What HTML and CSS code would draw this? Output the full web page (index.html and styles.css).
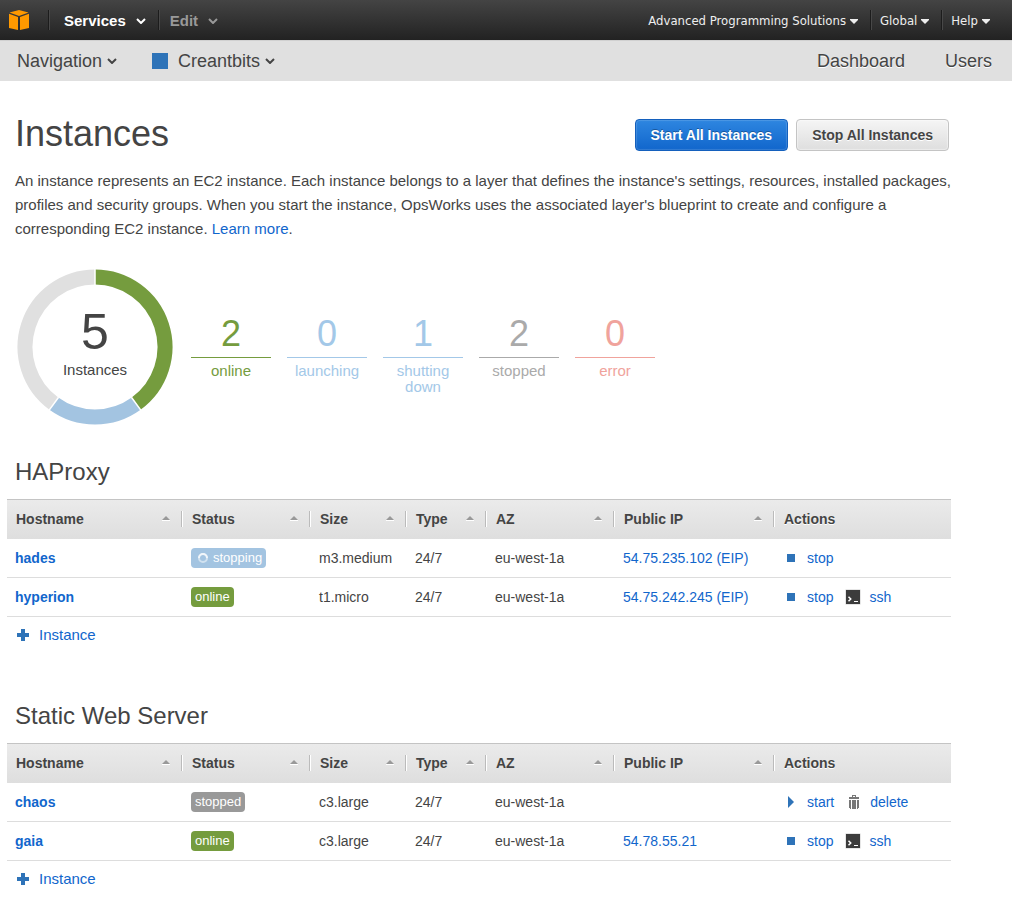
FILE: index.html
```html
<!DOCTYPE html>
<html lang="en">
<head>
<meta charset="utf-8">
<title>Instances</title>
<link rel="stylesheet" href="styles.css">
</head>
<body>
<svg class="symbols" aria-hidden="true">
  <symbol id="i-chevron" viewBox="0 0 10 6"><path d="M1 1l4 4 4-4" fill="none" stroke="currentColor" stroke-width="2"/></symbol>
  <symbol id="i-caret" viewBox="0 0 8 5"><path d="M0 0h8v1L4 5 0 1z" fill="currentColor"/></symbol>
  <symbol id="i-sort" viewBox="0 0 8 5"><path d="M0 4h8v1H0z" fill="#fff"/><path d="M4 0l4 4H0z" fill="#999"/></symbol>
  <symbol id="i-stop" viewBox="0 0 16 16"><path d="M4 4h8v8H4z" fill="#2e73b8"/></symbol>
  <symbol id="i-start" viewBox="0 0 16 16"><path d="M5 2l6 6-6 6z" fill="#2e73b8"/></symbol>
  <symbol id="i-ssh" viewBox="0 0 16 16"><path d="M.5 .5h15v15H.5z" fill="#ccc"/><path d="M1 1h14v14H1z" fill="#3c3c3c"/><path d="M3.500 7.750l2.250 2.250-2.250 2.250" fill="none" stroke="#fff" stroke-width="1.500"/><path d="M9 12h4v1H9z" fill="#fff"/></symbol>
  <symbol id="i-trash" viewBox="0 0 16 16"><path d="M6 1h4v2h3v2H3V3h3zM7 2v1h2V2z" fill="#777" fill-rule="evenodd"/><path d="M3 6h2v9H4v-1H3zM6 6h4v9H6zM11 6h2v8h-1v1h-1z" fill="#777"/></symbol>
  <symbol id="i-plus" viewBox="0 0 12 12"><path d="M4 0h4v4h4v4H8v4H4V8H0V4h4z" fill="#2e73b8"/></symbol>
</svg>

<header class="topbar">
  <a class="logo" href="#" aria-label="Home">
    <svg width="20" height="20" viewBox="0 0 20 20"><path d="M10 0l9.500 2.500L10 6 .5 2.500z M0 3.800l9 3.200V20l-9-2z M20 3.800L11 7v13l9-2z" fill="#f90"/></svg>
  </a>
  <nav class="topnav">
    <button class="topitem" type="button">Services<svg class="chevron"><use href="#i-chevron"/></svg></button>
    <button class="topitem dim" type="button">Edit<svg class="chevron"><use href="#i-chevron"/></svg></button>
  </nav>
  <nav class="account">
    <button class="acctitem" type="button">Advanced Programming Solutions<svg class="caret"><use href="#i-caret"/></svg></button>
    <button class="acctitem" type="button">Global<svg class="caret"><use href="#i-caret"/></svg></button>
    <button class="acctitem" type="button">Help<svg class="caret"><use href="#i-caret"/></svg></button>
  </nav>
</header>

<nav class="subbar">
  <button class="subitem" type="button">Navigation<svg class="chevron"><use href="#i-chevron"/></svg></button>
  <button class="subitem stack" type="button"><span class="swatch"></span>Creantbits<svg class="chevron"><use href="#i-chevron"/></svg></button>
  <div class="sublinks"><a href="#">Dashboard</a><a href="#">Users</a></div>
</nav>

<main class="page">
  <div class="pagehead">
    <h1>Instances</h1>
    <div class="buttons">
      <button class="btn primary" type="button">Start All Instances</button>
      <button class="btn" type="button">Stop All Instances</button>
    </div>
  </div>
  <p class="intro">An instance represents an EC2 instance. Each instance belongs to a layer that defines the instance's settings, resources, installed packages, profiles and security groups. When you start the instance, OpsWorks uses the associated layer's blueprint to create and configure a corresponding EC2 instance. <a href="#">Learn more</a>.</p>

  <div class="summary">
    <div class="donut">
      <svg width="156" height="156" viewBox="0 0 156 156" fill="none" stroke-width="15">
        <path d="M36.860 134.630A70 70 0 0 1 78 8" stroke="#e0e0e0"/>
        <path d="M119.140 134.630A70 70 0 0 1 36.860 134.630" stroke="#a3c4e1"/>
        <path d="M78 8A70 70 0 0 1 119.140 134.630" stroke="#759c3e"/>
        <path d="M78 0v16M114.400 128.200l9.400 12.900M41.600 128.200l-9.400 12.900" stroke="#fff" stroke-width="1.500"/>
      </svg>
      <div class="total"><span class="totalnum">5</span><span>Instances</span></div>
    </div>
    <ul class="counts">
      <li class="c-online"><b>2</b><span>online</span></li>
      <li class="c-busy"><b>0</b><span>launching</span></li>
      <li class="c-busy"><b>1</b><span>shutting down</span></li>
      <li class="c-stopped"><b>2</b><span>stopped</span></li>
      <li class="c-error"><b>0</b><span>error</span></li>
    </ul>
  </div>

  <section class="layer">
    <h2>HAProxy</h2>
    <table>
      <colgroup><col class="w-host"><col class="w-status"><col class="w-size"><col class="w-type"><col class="w-az"><col class="w-ip"><col></colgroup>
      <thead><tr>
        <th><button type="button">Hostname<svg class="sort"><use href="#i-sort"/></svg></button></th>
        <th><button type="button">Status<svg class="sort"><use href="#i-sort"/></svg></button></th>
        <th><button type="button">Size<svg class="sort"><use href="#i-sort"/></svg></button></th>
        <th><button type="button">Type<svg class="sort"><use href="#i-sort"/></svg></button></th>
        <th><button type="button">AZ<svg class="sort"><use href="#i-sort"/></svg></button></th>
        <th><button type="button">Public IP<svg class="sort"><use href="#i-sort"/></svg></button></th>
        <th class="last">Actions</th>
      </tr></thead>
      <tbody>
        <tr>
          <td><a class="host" href="#">hades</a></td>
          <td><span class="badge busy"><svg class="spinner" viewBox="0 0 10 10"><circle cx="5" cy="5" r="4" fill="none" stroke="#fff" stroke-opacity=".5" stroke-width="2"/><path d="M1 5a4 4 0 0 1 8 0" fill="none" stroke="#fff" stroke-opacity=".7" stroke-width="2"/></svg>stopping</span></td>
          <td>m3.medium</td><td>24/7</td><td>eu-west-1a</td>
          <td><a href="#">54.75.235.102 (EIP)</a></td>
          <td><div class="actions"><a href="#"><svg class="icon"><use href="#i-stop"/></svg>stop</a></div></td>
        </tr>
        <tr>
          <td><a class="host" href="#">hyperion</a></td>
          <td><span class="badge online">online</span></td>
          <td>t1.micro</td><td>24/7</td><td>eu-west-1a</td>
          <td><a href="#">54.75.242.245 (EIP)</a></td>
          <td><div class="actions"><a href="#"><svg class="icon"><use href="#i-stop"/></svg>stop</a><a href="#"><svg class="icon"><use href="#i-ssh"/></svg>ssh</a></div></td>
        </tr>
      </tbody>
    </table>
    <a class="add" href="#"><svg class="plus"><use href="#i-plus"/></svg>Instance</a>
  </section>

  <section class="layer">
    <h2>Static Web Server</h2>
    <table>
      <colgroup><col class="w-host"><col class="w-status"><col class="w-size"><col class="w-type"><col class="w-az"><col class="w-ip"><col></colgroup>
      <thead><tr>
        <th><button type="button">Hostname<svg class="sort"><use href="#i-sort"/></svg></button></th>
        <th><button type="button">Status<svg class="sort"><use href="#i-sort"/></svg></button></th>
        <th><button type="button">Size<svg class="sort"><use href="#i-sort"/></svg></button></th>
        <th><button type="button">Type<svg class="sort"><use href="#i-sort"/></svg></button></th>
        <th><button type="button">AZ<svg class="sort"><use href="#i-sort"/></svg></button></th>
        <th><button type="button">Public IP<svg class="sort"><use href="#i-sort"/></svg></button></th>
        <th class="last">Actions</th>
      </tr></thead>
      <tbody>
        <tr>
          <td><a class="host" href="#">chaos</a></td>
          <td><span class="badge stopped">stopped</span></td>
          <td>c3.large</td><td>24/7</td><td>eu-west-1a</td>
          <td></td>
          <td><div class="actions"><a href="#"><svg class="icon"><use href="#i-start"/></svg>start</a><a href="#"><svg class="icon"><use href="#i-trash"/></svg>delete</a></div></td>
        </tr>
        <tr>
          <td><a class="host" href="#">gaia</a></td>
          <td><span class="badge online">online</span></td>
          <td>c3.large</td><td>24/7</td><td>eu-west-1a</td>
          <td><a href="#">54.78.55.21</a></td>
          <td><div class="actions"><a href="#"><svg class="icon"><use href="#i-stop"/></svg>stop</a><a href="#"><svg class="icon"><use href="#i-ssh"/></svg>ssh</a></div></td>
        </tr>
      </tbody>
    </table>
    <a class="add" href="#"><svg class="plus"><use href="#i-plus"/></svg>Instance</a>
  </section>
</main>
</body>
</html>
```
FILE: styles.css
```css
* { box-sizing: border-box; }
body {
  margin: 0;
  background: #fff;
  color: #444;
  font: 15px/24px "Liberation Sans", Arial, sans-serif;
}
.symbols { display: none; }
svg { display: block; flex: none; }
button {
  margin: 0;
  padding: 0;
  border: 0;
  background: none;
  color: inherit;
  font: inherit;
  cursor: pointer;
}
a { color: #1166cc; text-decoration: none; }
.chevron { width: 10px; height: 6px; }
.caret { width: 8px; height: 5px; }

.topbar {
  display: flex;
  align-items: center;
  height: 40px;
  padding: 0 22px 0 9px;
  background: linear-gradient(#444, #222);
  color: #fff;
  text-shadow: 0 1px 1px #000;
}
.logo { margin-right: 19px; }
.topnav, .account { display: flex; }
.account { margin-left: auto; }
.topitem {
  display: flex;
  align-items: center;
  gap: 10px;
  height: 20px;
  padding: 2px 12px 0 15px;
  border-left: 1px solid #1c1c1c;
  box-shadow: inset 1px 0 #484848;
  font-size: 15px;
  font-weight: bold;
}
.topitem.dim { padding-left: 11px; color: #999; }
.acctitem {
  display: flex;
  align-items: center;
  gap: 4px;
  height: 20px;
  padding: 2px 0 0 9px;
  margin-left: 12px;
  border-left: 1px solid #1c1c1c;
  box-shadow: inset 1px 0 #484848;
  color: #eee;
  font: 13px/20px "DejaVu Sans Condensed", "DejaVu Sans", sans-serif;
}
.acctitem:first-child { border-left: 0; box-shadow: none; }

.subbar {
  display: flex;
  align-items: center;
  height: 41px;
  padding: 0 20px 0 17px;
  border-top: 1px solid #d0d0d0;
  background: #e0e0e0;
  font-size: 18px;
  text-shadow: 0 1px #fff;
}
.subitem { display: flex; align-items: center; gap: 5px; }
.stack { margin-left: 35px; }
.swatch { width: 16px; height: 16px; margin-right: 5px; background: #2e73b8; }
.sublinks { display: flex; gap: 40px; margin-left: auto; }
.sublinks a { color: #444; }

.page { padding: 34px 41px 0 7px; }
.pagehead {
  display: flex;
  align-items: flex-start;
  justify-content: space-between;
  margin-right: 20px;
  padding: 0 2px 0 8px;
}
h1 { margin: 0; font-size: 36px; font-weight: normal; line-height: 38px; }
.buttons { display: flex; gap: 8px; margin-top: 4px; }
.btn {
  height: 32px;
  padding: 0 15px;
  border: 1px solid #c4c4c4;
  border-radius: 4px;
  background: linear-gradient(#f5f5f5, #dedede);
  box-shadow: inset 0 0 1px 1px rgba(255, 255, 255, .4);
  font-size: 14px;
  font-weight: bold;
  text-shadow: 0 1px #fff;
}
.btn.primary {
  border-color: #1460bd;
  background: linear-gradient(#2e86e0, #1166cc);
  box-shadow: inset 0 0 1px 1px rgba(255, 255, 255, .15);
  color: #fff;
  text-shadow: 0 -1px rgba(0, 0, 0, .3);
}
.intro { margin: 16px 8px 28px; }

.summary { display: flex; gap: 18px; padding-left: 10px; }
.donut { display: grid; }
.donut > * { grid-area: 1 / 1; }
.total {
  display: flex;
  flex-direction: column;
  align-items: center;
  justify-content: center;
  gap: 2px;
  padding-bottom: 12px;
}
.totalnum { font-size: 50px; line-height: 56px; }
.total span:last-child { line-height: 16px; }
.counts {
  display: flex;
  gap: 16px;
  margin: 45px 0 0;
  padding: 0;
  list-style: none;
  text-align: center;
}
.counts li { width: 80px; }
.counts b {
  display: block;
  height: 44px;
  border-bottom: 1px solid;
  font-size: 36px;
  font-weight: normal;
  line-height: 40px;
}
.counts span { display: block; margin-top: 5px; line-height: 16px; }
.c-online { color: #759c3e; }
.c-busy { color: #a3c8e8; }
.c-stopped { color: #aaa; }
.c-error { color: #f0a39c; }

.layer { margin: 32px 20px 0 0; }
.layer + .layer { margin-top: 48px; }
h2 { margin: 0 8px 12px; font-size: 24px; font-weight: normal; line-height: 30px; }
table {
  width: 100%;
  border-collapse: separate;
  border-spacing: 0;
  table-layout: fixed;
  font-size: 14px;
  line-height: 20px;
}
.w-host { width: 176px; }
.w-status, .w-az { width: 128px; }
.w-size { width: 96px; }
.w-type { width: 80px; }
.w-ip { width: 160px; }
thead { background: linear-gradient(#ebebeb, #dedede); }
th {
  height: 40px;
  padding: 0 0 2px;
  border-top: 1px solid #c4c4c4;
  text-align: left;
  text-shadow: 0 1px #fff;
}
th.last { padding-left: 9px; }
th button {
  display: flex;
  align-items: center;
  justify-content: space-between;
  width: 100%;
  height: 16px;
  padding: 0 12px 0 9px;
  border-right: 1px solid #fff;
  box-shadow: inset -1px 0 #bbb;
}
.sort { width: 8px; height: 5px; }
td { height: 39px; padding: 0 0 0 8px; border-bottom: 1px solid #ddd; white-space: nowrap; }
.host { font-weight: bold; }
.badge {
  display: inline-flex;
  align-items: center;
  height: 20px;
  padding: 0 4px;
  border-radius: 4px;
  color: #fff;
  font-size: 13px;
  vertical-align: top;
}
.badge.busy { background: #a3c4e1; }
.badge.online { background: #759c3e; }
.badge.stopped { background: #999; }
.spinner { width: 10px; height: 10px; margin: 0 5px 0 3px; }
.actions { display: flex; gap: 12px; }
.actions a { display: flex; align-items: center; gap: 8px; }
.icon { width: 16px; height: 16px; }
.add {
  display: inline-flex;
  align-items: center;
  gap: 10px;
  height: 36px;
  padding-left: 10px;
  vertical-align: top;
}
.plus { width: 12px; height: 12px; }
```
